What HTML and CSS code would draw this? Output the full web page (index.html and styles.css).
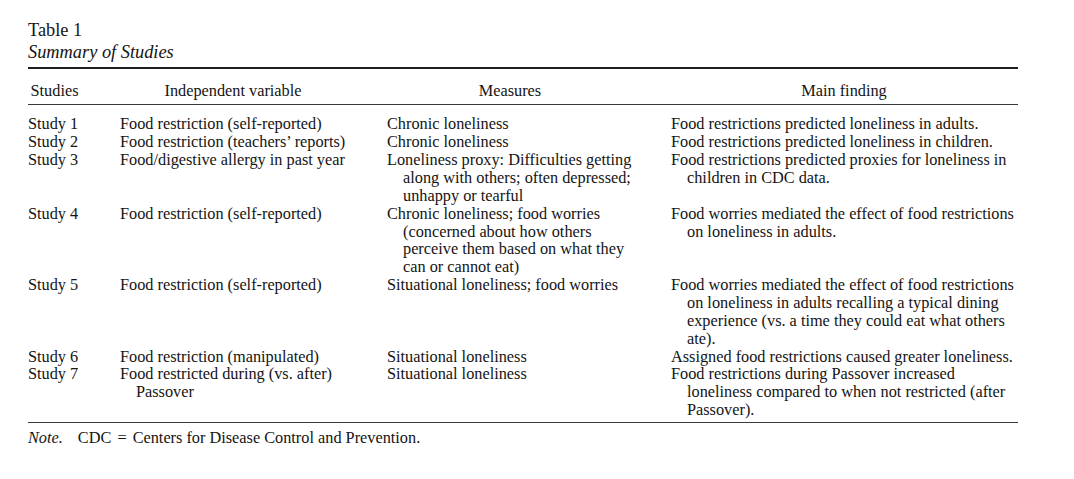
FILE: index.html
```html
<!DOCTYPE html>
<html lang="en">
<head>
<meta charset="utf-8">
<title>Table 1 — Summary of Studies</title>
<link rel="stylesheet" href="styles.css">
</head>
<body>
<div class="page">
  <div class="table-label">Table 1</div>
  <div class="table-caption">Summary of Studies</div>
  <table class="summary">
    <colgroup>
      <col class="c-study">
      <col class="c-iv">
      <col class="c-measures">
      <col class="c-finding">
    </colgroup>
    <thead>
      <tr>
        <th class="h-study">Studies</th>
        <th class="h-iv">Independent variable</th>
        <th class="h-measures">Measures</th>
        <th class="h-finding">Main finding</th>
      </tr>
    </thead>
    <tbody>
      <tr>
        <td>Study 1</td>
        <td>Food restriction (self-reported)</td>
        <td>Chronic loneliness</td>
        <td>Food restrictions predicted loneliness in adults.</td>
      </tr>
      <tr>
        <td>Study 2</td>
        <td>Food restriction (teachers’ reports)</td>
        <td>Chronic loneliness</td>
        <td>Food restrictions predicted loneliness in children.</td>
      </tr>
      <tr>
        <td>Study 3</td>
        <td>Food/digestive allergy in past year</td>
        <td>Loneliness proxy: Difficulties getting<br>along with others; often depressed;<br>unhappy or tearful</td>
        <td>Food restrictions predicted proxies for loneliness in<br>children in CDC data.</td>
      </tr>
      <tr>
        <td>Study 4</td>
        <td>Food restriction (self-reported)</td>
        <td>Chronic loneliness; food worries<br>(concerned about how others<br>perceive them based on what they<br>can or cannot eat)</td>
        <td>Food worries mediated the effect of food restrictions<br>on loneliness in adults.</td>
      </tr>
      <tr>
        <td>Study 5</td>
        <td>Food restriction (self-reported)</td>
        <td>Situational loneliness; food worries</td>
        <td>Food worries mediated the effect of food restrictions<br>on loneliness in adults recalling a typical dining<br>experience (vs. a time they could eat what others<br>ate).</td>
      </tr>
      <tr>
        <td>Study 6</td>
        <td>Food restriction (manipulated)</td>
        <td>Situational loneliness</td>
        <td>Assigned food restrictions caused greater loneliness.</td>
      </tr>
      <tr>
        <td>Study 7</td>
        <td>Food restricted during (vs. after)<br>Passover</td>
        <td>Situational loneliness</td>
        <td>Food restrictions during Passover increased<br>loneliness compared to when not restricted (after<br>Passover).</td>
      </tr>
    </tbody>
  </table>
  <p class="note"><span class="note-label">Note.</span>CDC <span class="eq">=</span> Centers for Disease Control and Prevention.</p>
</div>
</body>
</html>
```

FILE: styles.css
```css
html, body {
  margin: 0;
  padding: 0;
  background: #ffffff;
}

.page {
  padding: 20px 28px 0 28px;
  font-family: "Liberation Serif", "Times New Roman", Times, serif;
  color: #141414;
}

.table-label,
.table-caption {
  font-size: 18.35px;
  line-height: 21.6px;
}

.table-caption {
  font-style: italic;
}

.summary {
  width: 990px;
  margin-top: 4px;
  border-collapse: collapse;
  table-layout: fixed;
  border-top: 2px solid #1e1e1e;
  border-bottom: 1px solid #3a3a3a;
  font-size: 16.3px;
  line-height: 17.86px;
}

.c-study { width: 92px; }
.c-iv { width: 267px; }
.c-measures { width: 284px; }
.c-finding { width: 347px; }

.summary th {
  font-weight: normal;
  text-align: center;
  padding: 12.5px 40px 4.4px 0;
  border-bottom: 1px solid #3a3a3a;
}

.summary th.h-study { padding-right: 39px; }
.summary th.h-iv { padding-right: 41px; }
.summary th.h-measures { padding-right: 38px; }
.summary th.h-finding { padding-right: 1px; }

.summary td {
  vertical-align: top;
  text-align: left;
  white-space: nowrap;
  padding: 0 0 0 16px;
  text-indent: -16px;
}

.summary tbody tr:first-child td {
  padding-top: 10.5px;
}

.summary tbody tr:last-child td {
  padding-bottom: 2.5px;
}

.note {
  margin: 6.7px 0 0 0;
  font-size: 16.3px;
  line-height: 17.86px;
}

.note-label {
  font-style: italic;
  margin-right: 15px;
}

.eq {
  margin: 0 2px;
}
```
